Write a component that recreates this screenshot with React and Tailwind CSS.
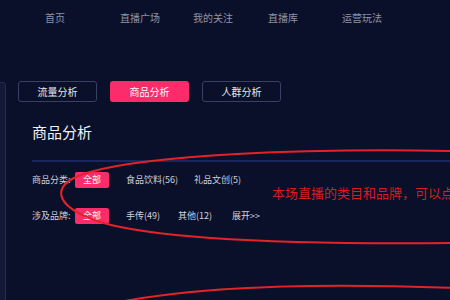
export default function App() {
  const font = { fontFamily: '"Noto Sans CJK SC", "Noto Sans", sans-serif' };
  return (
    <div className="relative w-[450px] h-[300px] overflow-hidden bg-[#0a1029] text-white" style={font}>
      {/* nav */}
      <div className="flex h-[35px] items-center pl-[45px] text-[10px] text-[#8f93a8]">
        <div className="w-[75px]">首页</div>
        <div className="w-[73px]">直播广场</div>
        <div className="w-[75px]">我的关注</div>
        <div className="w-[74px]">直播库</div>
        <div>运营玩法</div>
      </div>
      <div className="flex">
        <div className="mt-[47px] h-[240px] w-[6px] rounded-tr-[4px] border-r border-t border-[#262c4c] bg-[#121836]" />
        <div className="flex-1 pl-[12px]">
          <div className="mt-[46px] flex gap-[13px]">
            <div className="flex h-[21px] w-[79px] items-center justify-center rounded-[3px] border border-[#3a4062] text-[10px] text-[#e6e8f0]">流量分析</div>
            <div className="flex h-[21px] w-[79px] items-center justify-center rounded-[3px] bg-[#fc2b6a] text-[10px] text-white">商品分析</div>
            <div className="flex h-[21px] w-[79px] items-center justify-center rounded-[3px] border border-[#3a4062] text-[10px] text-[#e6e8f0]">人群分析</div>
          </div>
          <div className="pl-[14px]">
            <div className="mt-[20px] text-[15px] leading-[20px] text-[#f2f3f7]">商品分析</div>
            <div className="mt-[18px] h-[2px] bg-[#1b2560]" />
            <div className="mt-[10px] flex h-[16px] items-center text-[9px] text-[#d0d3de]">
              <div className="w-[43px]">商品分类:</div>
              <div className="flex h-[16px] w-[34px] items-center justify-center rounded-[2px] bg-[#fc2b6a] text-white">全部</div>
              <div className="ml-[17px] w-[68px]">食品饮料(56)</div>
              <div>礼品文创(5)</div>
            </div>
            <div className="mt-[20px] flex h-[16px] items-center text-[9px] text-[#d0d3de]">
              <div className="w-[43px]">涉及品牌:</div>
              <div className="flex h-[16px] w-[34px] items-center justify-center rounded-[2px] bg-[#fc2b6a] text-white">全部</div>
              <div className="ml-[17px] w-[52px]">手传(49)</div>
              <div className="w-[54px]">其他(12)</div>
              <div>展开&gt;&gt;</div>
            </div>
          </div>
        </div>
      </div>
      {/* annotation */}
      <svg className="absolute left-0 top-0" width="450" height="300" viewBox="0 0 450 300" fill="none">
        <path d="M 455 151 C 300 148, 150 155, 90 172 C 50 183, 50 205, 100 222 C 170 243, 350 244, 455 243" stroke="#e3232a" strokeWidth="2" />
        <path d="M 105 305 C 180 288, 300 282, 455 288" stroke="#e3232a" strokeWidth="2" />
      </svg>
      <div className="absolute left-[272px] top-[184px] whitespace-nowrap text-[13px] leading-[18px] text-[#d81c22]">本场直播的类目和品牌，可以点</div>
    </div>
  );
}
